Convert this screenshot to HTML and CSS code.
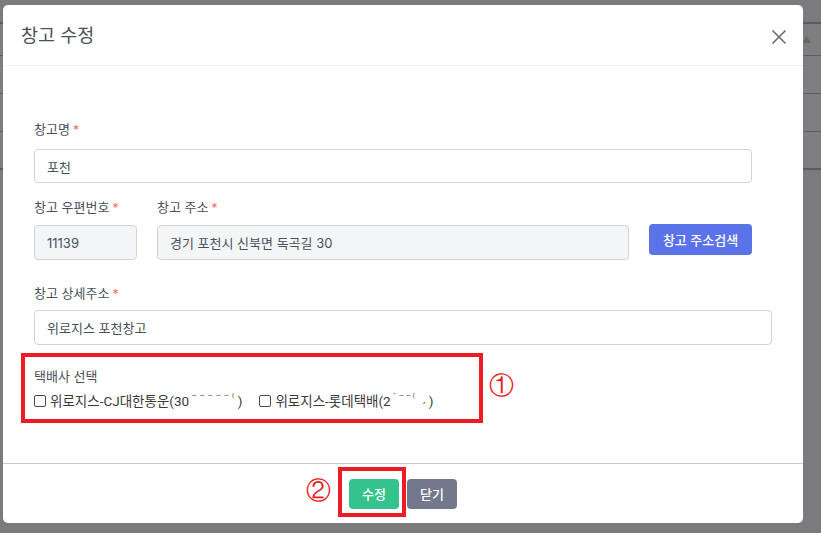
FILE: index.html
```html
<!DOCTYPE html>
<html lang="ko">
<head>
<meta charset="utf-8">
<link rel="stylesheet" href="styles.css">
</head>
<body>
<div class="page-bg">
  <div class="bg-top"></div>
  <div class="bg-row r1"><span class="sort">▲</span></div>
  <div class="bg-row r2"></div>
  <div class="bg-row r3"></div>
  <div class="bg-row r4"></div>
</div>

<div class="modal">
  <div class="modal-header">
    <h5 class="modal-title">창고 수정</h5>
    <button class="close" aria-label="닫기">
      <svg width="16" height="16" viewBox="0 0 16 16"><path d="M1.5 1.5 L14.5 14.5 M14.5 1.5 L1.5 14.5" stroke="#6c6c6c" stroke-width="1.6" fill="none"/></svg>
    </button>
  </div>

  <div class="modal-body">
    <div class="field f1">
      <label class="lbl">창고명<span class="req">*</span></label>
      <input class="ctl w-name" value="포천">
    </div>

    <div class="row f2">
      <div class="field">
        <label class="lbl">창고 우편번호<span class="req">*</span></label>
        <input class="ctl dis w-zip" value="11139" disabled>
      </div>
      <div class="field">
        <label class="lbl">창고 주소<span class="req">*</span></label>
        <input class="ctl dis w-addr" value="경기 포천시 신북면 독곡길 30" disabled>
      </div>
      <button class="btn btn-primary btn-search">창고 주소검색</button>
    </div>

    <div class="field f3">
      <label class="lbl">창고 상세주소<span class="req">*</span></label>
      <input class="ctl w-detail" value="위로지스 포천창고">
    </div>

    <div class="courier">
      <div class="lbl courier-title">택배사 선택</div>
      <div class="checks">
        <label class="chk"><span class="box"></span>위로지스-CJ대한통운(30<span class="redact r-a">⁻⁻⁻⁻⁻⁽</span>)</label>
        <label class="chk"><span class="box"></span>위로지스-롯데택배(2<span class="redact r-b">˙⁻⁻⁽ ˏ</span>)</label>
      </div>
    </div>
  </div>

  <div class="modal-footer">
    <button class="btn btn-success">수정</button>
    <button class="btn btn-secondary">닫기</button>
  </div>

  <div class="anno a1"></div>
  <div class="anno-num n1">①</div>
  <div class="anno a2"></div>
  <div class="anno-num n2">②</div>
</div>
</body>
</html>
```

FILE: styles.css
```css
* { box-sizing: border-box; }
html, body { margin: 0; padding: 0; }
body {
  width: 821px;
  height: 533px;
  overflow: hidden;
  background: #7b7b7d;
  font-family: Inter, "Noto Sans CJK KR", sans-serif;
  position: relative;
}

/* faded page behind the modal */
.page-bg { display: flex; flex-direction: column; }
.bg-top { height: 22px; }
.bg-row {
  border-top: 1px solid #5c5c5e;
  background: #7e7e80;
  display: flex;
  justify-content: flex-end;
  align-items: center;
}
.r1 { height: 33px; border-top-width: 2px; }
.r2 { height: 38px; }
.r3 { height: 38px; }
.r4 { height: 39px; border-bottom: 2px solid #5c5c5e; }
.sort { font-size: 9px; color: #666; margin-right: 10px; }

/* modal */
.modal {
  position: absolute;
  left: 3px;
  top: 5px;
  width: 800px;
  height: 518px;
  background: #fff;
  border-radius: 5px;
  display: flex;
  flex-direction: column;
}
.modal-header {
  height: 61px;
  border-bottom: 1px solid #eff2f7;
  display: flex;
  align-items: center;
  justify-content: space-between;
  padding: 0 16px 0 18px;
}
.modal-title {
  margin: 0;
  font-size: 18.5px;
  font-weight: 400;
  color: #4d5156;
  line-height: 1;
  padding-top: 1px;
}
.close {
  background: none;
  border: 0;
  padding: 0;
  width: 16px;
  height: 16px;
  margin-top: 3px;
  display: flex;
}

.modal-body {
  flex: 1;
  padding: 53px 0 0 31px;
  display: flex;
  flex-direction: column;
}
.field { display: flex; flex-direction: column; }
.lbl {
  font-size: 13px;
  line-height: 20px;
  color: #495057;
}
.req { color: #f46a6a; margin-left: 3px; font-size: 12px; }

.ctl {
  font: inherit;
  font-size: 13px;
  color: #495057;
  border: 1px solid #ced4da;
  border-radius: 4px;
  background: #fff;
  padding: 0 12px;
  height: 35px;
  outline: none;
}
.ctl.dis { background: #f4f5f7; color: #495057; -webkit-text-fill-color: #495057; opacity: 1; }

.f1 .lbl { margin-bottom: 9px; }
.w-name { width: 718px; height: 34px; }

.row { display: flex; gap: 20px; align-items: flex-start; margin-top: 14px; }
.row .lbl { margin-bottom: 7px; }
.w-zip { width: 103px; }
.w-addr { width: 472px; }

.btn {
  font-family: Inter, "Noto Sans CJK KR", sans-serif;
  font-size: 13px;
  font-weight: 500;
  color: #fff;
  border: 0;
  border-radius: 4px;
  padding: 0;
  display: flex;
  align-items: center;
  justify-content: center;
}
.btn-primary { background: #5b73e8; }
.btn-search { width: 103px; height: 31px; margin-top: 27px; }

.f3 { margin-top: 23px; }
.f3 .lbl { margin-bottom: 6px; }
.w-detail { width: 738px; }

.courier { margin-top: 21px; }
.courier-title { margin-bottom: 5px; }
.checks { display: flex; gap: 17px; }
.chk {
  display: flex;
  align-items: center;
  font-family: Roboto, "Noto Sans CJK KR", sans-serif;
  font-size: 13.5px;
  line-height: 20px;
  color: #3a3a3a;
}
.box {
  width: 12px;
  height: 12px;
  border: 1px solid #4a4a4a;
  border-radius: 2px;
  background: #fff;
  margin-right: 4px;
}
.redact {
  font-family: "DejaVu Sans", sans-serif;
  font-size: 11px;
  color: #444;
  align-self: flex-start;
  line-height: 14px;
}
.r-a { letter-spacing: 2.3px; margin: 0 1px 0 2px; }
.r-b { letter-spacing: 1.2px; margin: 0 1px 0 1px; }

.modal-footer {
  height: 60px;
  border-top: 1px solid #c8c8c8;
  display: flex;
  justify-content: center;
  align-items: center;
  gap: 8px;
}
.btn-success { background: #34c38f; width: 50px; height: 30px; }
.btn-secondary { background: #74788d; width: 50px; height: 30px; }

/* annotations drawn over the screenshot */
.anno {
  position: absolute;
  border: 4px solid #ed1c24;
}
.a1 { left: 18px; top: 348px; width: 462px; height: 70px; }
.a2 { left: 335px; top: 462px; width: 68px; height: 50px; }
.anno-num {
  position: absolute;
  color: #ed1c24;
  font-family: "DejaVu Serif", "Liberation Serif", serif;
  font-size: 25px;
  line-height: 1;
}
.n1 { left: 486px; top: 368px; }
.n2 { left: 303px; top: 473px; }
```
